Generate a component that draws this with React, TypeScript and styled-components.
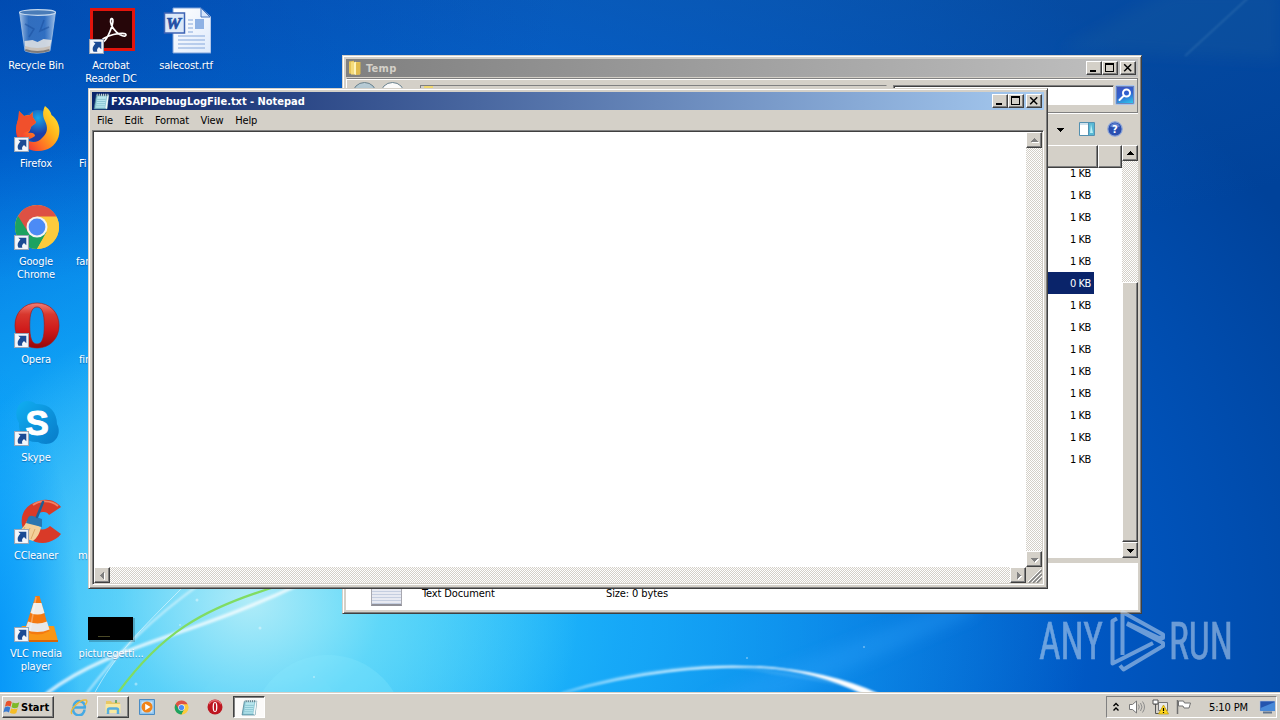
import { ReactNode } from 'react'
import styled, { createGlobalStyle, css } from 'styled-components'

const GlobalStyle = createGlobalStyle`
  * {
    box-sizing: border-box;
  }

  body {
    margin: 0;
    overflow: hidden;
    font-family: "DejaVu Sans Condensed", "DejaVu Sans", sans-serif;
    font-stretch: condensed;
    font-size: 11px;
    line-height: 13px;
    letter-spacing: -0.12px;
    color: #000;
    cursor: default;
  }

  svg {
    display: block;
    flex: none;
  }
`

const raised = css`
  border: 1px solid;
  border-color: #fff #404040 #404040 #fff;
  box-shadow: inset -1px -1px 0 #808080;
  background: #d4d0c8;
`

const sunken = css`
  border: 1px solid;
  border-color: #808080 #fff #fff #808080;
`

const Screen = styled.div`
  position: relative;
  display: flex;
  flex-direction: column;
  width: 1280px;
  height: 720px;
  overflow: hidden;
`

const Desktop = styled.main`
  position: relative;
  flex: 1;
  overflow: hidden;
  background:
    radial-gradient(ellipse 90px 300px at -10px 660px, rgba(0, 145, 248, .9) 0%, rgba(0, 150, 250, .6) 45%, rgba(0, 150, 252, 0) 100%),
    radial-gradient(ellipse 560px 280px at 0 0, rgba(0, 62, 160, .5) 0%, rgba(0, 62, 160, 0) 100%),
    radial-gradient(ellipse 330px 300px at 250px 600px, rgba(190, 240, 248, .9) 0%, rgba(130, 226, 248, .6) 40%, rgba(60, 204, 248, 0) 100%),
    radial-gradient(ellipse 760px 520px at 330px 620px, rgba(50, 208, 250, .95) 0%, rgba(30, 180, 252, .75) 38%, rgba(10, 140, 240, 0) 100%),
    radial-gradient(ellipse 900px 320px at 700px -60px, rgba(20, 100, 185, .5) 0%, rgba(20, 100, 190, 0) 100%),
    radial-gradient(ellipse 1250px 900px at 180px 640px, #009cfa 0%, #0090f0 28%, #006edc 52%, #0058c4 72%, #00429a 100%);
`

const Wallpaper = styled.svg`
  position: absolute;
  inset: 0;
`

const IconGrid = styled.div`
  position: relative;
  display: grid;
  grid-template-columns: repeat(3, 75px);
  grid-auto-rows: 98px;
  margin-left: -1px;
  padding-top: 7px;
`

const Shortcut = styled.div`
  display: flex;
  flex-direction: column;
  align-items: center;
`

const ShortcutPicture = styled.div`
  position: relative;
  display: flex;
  justify-content: center;
  height: 48px;
  width: 48px;
`

const ShortcutLabel = styled.div<{ $indent?: number }>`
  margin: 4px 1px 0 0;
  color: #fff;
  text-align: center;
  text-shadow: 0 1px 1px rgba(0, 40, 110, .45);
  white-space: pre;
  ${({ $indent }) => $indent !== undefined && css`
    align-self: flex-start;
    margin-top: 52px;
    padding-left: ${$indent}px;
  `}
`

const ArrowBadge = styled.svg`
  position: absolute;
  left: 1px;
  bottom: 1px;
`

const Window = styled.section<{ $x: number, $y: number, $w: number, $h: number }>`
  position: absolute;
  left: ${({ $x }) => $x}px;
  top: ${({ $y }) => $y}px;
  width: ${({ $w }) => $w}px;
  height: ${({ $h }) => $h}px;
  display: flex;
  flex-direction: column;
  padding: 3px;
  border: 1px solid;
  border-color: #d4d0c8 #404040 #404040 #d4d0c8;
  box-shadow: inset 1px 1px 0 #fff, inset -1px -1px 0 #808080;
  background: #d4d0c8;
`

const TitleBar = styled.header<{ $active?: boolean }>`
  display: flex;
  align-items: center;
  flex: none;
  height: 18px;
  padding: 0 2px 0 1px;
  color: ${({ $active }) => ($active ? '#fff' : '#d4d0c8')};
  background: ${({ $active }) => ($active
    ? 'linear-gradient(90deg, #0a246a, #a6caf0)'
    : 'linear-gradient(90deg, #808080, #c0c0c0)')};
`

const Title = styled.h1<{ $spacing?: number, $gap?: number }>`
  flex: 1;
  margin: 0 0 0 ${({ $gap = 1 }) => $gap}px;
  padding-top: 1px;
  font-size: 11px;
  line-height: 14px;
  font-weight: bold;
  letter-spacing: ${({ $spacing = 0 }) => $spacing}px;
`

const CaptionButton = styled.button<{ $gap?: boolean }>`
  ${raised}
  width: 16px;
  height: 14px;
  padding: 0;
  margin-left: ${({ $gap }) => ($gap ? 2 : 0)}px;
`

const MenuBar = styled.nav`
  display: flex;
  flex: none;
  height: 20px;
  align-items: center;
  padding-left: 5px;
  gap: 11.6px;
`

const Sheet = styled.div`
  display: grid;
  grid-template-columns: 1fr 16px;
  grid-template-rows: 1fr 16px;
  flex: 1;
  border: 1px solid;
  border-color: #808080 #fff #fff #808080;
  box-shadow: inset 1px 1px 0 #404040;
  padding: 1px;
`

const Page = styled.div`
  background: #fff;
`

const ScrollBar = styled.div<{ $horizontal?: boolean }>`
  display: flex;
  flex-direction: ${({ $horizontal }) => ($horizontal ? 'row' : 'column')};
  justify-content: space-between;
  background: repeating-conic-gradient(#fff 0 25%, #d4d0c8 0 50%) 0 0 / 2px 2px;
`

const ScrollButton = styled.button`
  ${raised}
  display: flex;
  align-items: center;
  justify-content: center;
  flex: none;
  width: 16px;
  height: 16px;
  padding: 0;
`

const ScrollThumb = styled.div`
  ${raised}
  height: 260px;
  margin-top: auto;
`

const Corner = styled.div`
  display: flex;
  align-items: flex-end;
  justify-content: flex-end;
  background: #d4d0c8;
`

const AddressBand = styled.div`
  display: flex;
  flex: none;
  height: 35px;
  margin-top: 1px;
  padding: 6px 1px 0 5px;
  border: 1px solid;
  border-color: #808080 #808080 #808080 #fff;
  box-shadow: inset 0 1px 0 #fff, 0 1px 0 #fff;
`

const RoundButton = styled.div`
  width: 25px;
  height: 25px;
  margin: -3px 3px 0 0;
  border: 1px solid #68808c;
  border-radius: 50%;
  background: linear-gradient(#b8ccd6, #9db5c0);
  & + & {
    background: #fafafa;
  }
`

const Field = styled.div<{ $w: number, $gap: number, $disabled?: boolean }>`
  display: flex;
  width: ${({ $w }) => $w}px;
  height: 21px;
  margin-left: ${({ $gap }) => $gap}px;
  padding-left: 3px;
  background: ${({ $disabled }) => ($disabled ? '#d4d0c8' : '#fff')};
  border: 1px solid;
  border-color: #808080 #d4d0c8 #d4d0c8 #808080;
  box-shadow: ${({ $disabled }) => ($disabled ? 'none' : 'inset 1px 1px 0 #404040')};
`

const Crumb = styled.div`
  width: 9px;
  height: 12px;
  background: #f0d870;
`

const SearchButton = styled.div`
  display: flex;
  align-items: center;
  justify-content: center;
  width: 20px;
  height: 20px;
  margin-left: 1px;
  border: 1px solid #a9c4ee;
  outline: 1px solid #6f86b8;
  outline-offset: -2px;
  border-radius: 2px;
  background: linear-gradient(160deg, #3d55c0 10%, #2f62d0 50%, #30d8f0 100%);
`

const CommandBar = styled.div`
  display: flex;
  align-items: center;
  justify-content: flex-end;
  flex: none;
  height: 32px;
  padding-right: 15px;
  gap: 11px;
`

const ListArea = styled.div`
  display: grid;
  grid-template-columns: 1fr 16px;
  height: 413px;
  background: #fff;
`

const ListPane = styled.div`
  display: flex;
  flex-direction: column;
  overflow: hidden;
`

const ColumnHeads = styled.div`
  position: relative;
  display: flex;
  flex: none;
  height: 23px;
`

const ColumnHead = styled.div<{ $w?: number }>`
  width: ${({ $w }) => ($w ? `${$w}px` : 'auto')};
  flex: ${({ $w }) => ($w ? 'none' : 1)};
  ${raised}
`

const FileRow = styled.div<{ $selected?: boolean }>`
  display: flex;
  align-items: center;
  justify-content: flex-end;
  flex: none;
  height: 22px;
  width: 748px;
  padding-right: 3px;
  letter-spacing: -0.4px;
  color: ${({ $selected }) => ($selected ? '#fff' : '#000')};
  background: ${({ $selected }) => ($selected ? '#0a246a' : 'transparent')};
`

const Rows = styled.div`
  margin-top: -6px;
`

const Details = styled.footer`
  display: flex;
  flex: 1;
  margin-top: 5px;
  padding: 22px 0 0 25px;
  background: #fff;
`

const DetailText = styled.div<{ $w: number }>`
  width: ${({ $w }) => $w}px;
  padding-top: 2px;
`

const DocumentThumb = styled.div`
  width: 31px;
  height: 21px;
  margin-right: 20px;
  border: 1px solid #a8a8b0;
  border-bottom: 2px solid #909098;
  background: repeating-linear-gradient(#e8eaf2 0 2px, #c5cee0 2px 3px);
`

const TaskBar = styled.footer`
  position: relative;
  display: flex;
  align-items: center;
  height: 28px;
  padding: 1px 3px 0 2px;
  background: #d4d0c8;
  border-top: 1px solid #d4d0c8;
  box-shadow: inset 0 1px 0 #fff;
`

const StartButton = styled.button`
  ${raised}
  display: flex;
  align-items: center;
  gap: 0;
  width: 52px;
  height: 22px;
  padding: 0;
  margin-right: 9px;
  font: bold 11px "DejaVu Sans Condensed", "DejaVu Sans", sans-serif;
  font-stretch: condensed;
  letter-spacing: 0;
`

const TaskItem = styled.div<{ $state?: 'open' | 'active' }>`
  display: flex;
  align-items: center;
  justify-content: center;
  width: 32px;
  height: 22px;
  margin-right: 2px;
  ${({ $state }) => $state === 'open' && raised}
  ${({ $state }) => $state === 'active' && css`
    border: 1px solid;
    border-color: #404040 #fff #fff #404040;
    box-shadow: inset 1px 1px 0 #808080;
    background: #fbfaf9;
  `}
`

const Tray = styled.div`
  ${sunken}
  display: flex;
  align-items: center;
  width: 171px;
  height: 22px;
  margin-left: auto;
  padding-left: 5px;
`

const TrayIcons = styled.div`
  display: flex;
  align-items: center;
  gap: 6px;
  margin-left: 8px;
`

const Clock = styled.time`
  flex: 1;
  text-align: center;
  padding-left: 5px;
`

const Watermark = styled.svg`
  position: absolute;
  left: 1030px;
  top: 606px;
  overflow: visible;
`

type GlyphProps = { d: string, muted?: boolean }

function ArrowGlyph({ d, muted }: GlyphProps) {
  return (
    <svg width="9" height="9" viewBox="0 0 9 9" shapeRendering="crispEdges">
      {muted && <path d={d} fill="#fff" transform="translate(1 1)" />}
      <path d={d} fill={muted ? '#808080' : '#000'} />
    </svg>
  )
}

const UP = 'M4 2h1v1h1v1h1v1h1v1H1V5h1V4h1V3h1z'
const DOWN = 'M1 3h7v1H7v1H6v1H5v1H4V6H3V5H2V4H1z'
const LEFT = 'M2 4h1V3h1V2h1V1h1v7H5V7H4V6H3V5H2z'
const RIGHT = 'M3 1h1v1h1v1h1v1h1v1H6v1H5v1H4v1H3z'

function CaptionButtons() {
  return (
    <>
      <CaptionButton aria-label="Minimize">
        <svg width="14" height="12" shapeRendering="crispEdges"><path d="M3 8h6v2H3z" /></svg>
      </CaptionButton>
      <CaptionButton aria-label="Maximize">
        <svg width="14" height="12" shapeRendering="crispEdges">
          <path d="M2 1h9v9H2zM3 3v6h7V3z" fillRule="evenodd" />
        </svg>
      </CaptionButton>
      <CaptionButton aria-label="Close" $gap>
        <svg width="14" height="12"><path d="M3.200 2.200l7 7M10.200 2.200l-7 7" stroke="#000" strokeWidth="1.500" /></svg>
      </CaptionButton>
    </>
  )
}

function NotepadIcon({ size = 16 }: { size?: number }) {
  return (
    <svg width={size} height={size} viewBox="0 0 16 16">
      <path d="M3.200 2h11.600l-1.600 13H1z" fill="#8fc9d6" stroke="#477e90" strokeWidth=".7" />
      <path d="M4.400 3h8l-1.500 10.600h-8z" fill="#b8e6ee" />
      <path d="M4 6h8M3.700 8h8M3.400 10h8M3.100 12h8" stroke="#75b5c5" strokeWidth=".6" />
      <path d="M13.400 3l1.400-.8L13.200 15l-1.600-.8z" fill="#f1f7f8" />
      <path d="M4 .7v2M6 .7v2M8 .7v2M10 .7v2M12 .7v2M14 .7v2" stroke="#e3ebed" strokeWidth=".9" />
      <path d="M4.800 1v2M6.800 1v2M8.800 1v2M10.800 1v2M12.800 1v2" stroke="#46616b" strokeWidth=".6" />
    </svg>
  )
}

function FolderIcon() {
  return (
    <svg width="16" height="16" viewBox="0 0 16 16">
      <path d="M2 1.500l5-.8v13.500l-5-.7z" fill="#e7c659" />
      <path d="M4 2h9v12.500H4z" fill="#f5dc7d" />
      <path d="M7 3l2-1.500V15l-2-1z" fill="#fff4ba" />
      <path d="M9 2.500l4.500-.5v12L9 15z" fill="#e0bb4e" />
    </svg>
  )
}

function RecycleBin() {
  return (
    <svg width="48" height="48" viewBox="0 0 48 48">
      <defs>
        <linearGradient id="bin">
          <stop offset="0" stopColor="#dceaf8" stopOpacity=".75" />
          <stop offset=".25" stopColor="#5283c4" stopOpacity=".6" />
          <stop offset=".7" stopColor="#4a80c8" stopOpacity=".65" />
          <stop offset="1" stopColor="#c5dcf5" stopOpacity=".8" />
        </linearGradient>
      </defs>
      <path d="M6.500 5l5.500 39q12 4.500 25-.2L42.500 5z" fill="url(#bin)" stroke="#a5c2e4" strokeWidth=".8" />
      <path d="M12 17l9 5-5 8M31 13l-4 11 9-4" fill="none" stroke="#174b9c" strokeWidth="1.500" opacity=".5" />
      <path d="M11.500 34l8 -1 5 2 6-3 8 1-2 10q-12 4-24 0z" fill="#e8e6e4" opacity=".85" />
      <path d="M12 39q12 4 25 0l-.6 5q-12 4-23.800 0z" fill="#c8c0b8" />
      <path d="M12.300 43q12 4 24.200 0" stroke="#7d7a7a" strokeWidth="2" fill="none" />
      <ellipse cx="24.500" cy="5.500" rx="18" ry="2.800" fill="#4a7cb8" stroke="#c5d9ef" strokeWidth="1.200" />
    </svg>
  )
}

function AcrobatIcon() {
  return (
    <svg width="48" height="48" viewBox="0 0 48 48">
      <path d="M2 1h45v43H2z" fill="#e3140c" />
      <path d="M5 4h39v37H5z" fill="#260609" />
      <path
        d="M13.500 35c-2-2 6-6 12-7.500 7-1.700 13-1.700 12.500.6-.6 2.400-6 .4-9.500-3-4.500-4.300-6.800-9.600-5.800-12.600.8-2 2.600-.7 2.200 2.200-.8 6-7.300 22.300-11.400 20.300z"
        fill="none"
        stroke="#fff"
        strokeWidth="1.700"
      />
    </svg>
  )
}

function WordIcon() {
  return (
    <svg width="48" height="48" viewBox="0 0 48 48">
      <defs>
        <linearGradient id="paper" x2="1" y2="1">
          <stop offset="0" stopColor="#fff" />
          <stop offset="1" stopColor="#dfeafb" />
        </linearGradient>
      </defs>
      <path d="M10 1h28l10 9v36H10z" fill="url(#paper)" stroke="#7da1d8" strokeWidth="1" />
      <path d="M38 1v9h9z" fill="#d5e4fa" stroke="#4474c0" strokeWidth="1" />
      <path d="M25 13h5M25 17h5M25 21h5M25 25h5M15 29h27M15 33h27M15 37h27M15 41h27" stroke="#86a8dc" strokeWidth="1.200" />
      <path d="M32 12h9v10h-9z" fill="#8eb1e4" />
      <path d="M1.500 6h20v20h-20z" fill="#dce8f8" stroke="#3d63b4" strokeWidth="1.500" />
      <text x="3" y="21.500" fontFamily="Liberation Serif, serif" fontWeight="bold" fontStyle="italic" fontSize="17" fill="#234fa4" stroke="#234fa4" strokeWidth=".7">W</text>
    </svg>
  )
}

function FirefoxIcon() {
  return (
    <svg width="48" height="48" viewBox="0 0 48 48">
      <defs>
        <linearGradient id="fox" x1="1" y1="0" x2="0" y2=".8">
          <stop offset="0" stopColor="#fff33c" />
          <stop offset=".4" stopColor="#ffb31a" />
          <stop offset=".7" stopColor="#ff6b26" />
          <stop offset="1" stopColor="#e8233f" />
        </linearGradient>
        <radialGradient id="globe" cy=".25">
          <stop offset="0" stopColor="#18a6e8" />
          <stop offset="1" stopColor="#1b3fa8" />
        </radialGradient>
      </defs>
      <circle cx="25" cy="21" r="16" fill="url(#globe)" />
      <path
        d="M32 1c5 4 6 7 6.500 9 7 5 9.500 14 7 22-3 9-11 14-20 14C13 46 3.500 38 3 26c0-7 2-11 3-13l0-7 5 5c2-1 4-1 6-1l3-3c-1 3-.5 5 1 7l2 3c0 2-4 3-5 5-1 3-1 4-3 6 5-1 7 1 7 3-3 2-6 4-9 3 4 4 12 4 16-1 6-5 6-11 3-17-3-6-2-11 0-15z"
        fill="url(#fox)"
      />
      <path d="M5 14l1-8 5 5 6-1 3-3c-1 3-.5 5 1 7l2 3c0 2-4 3-5 5l-2 4c-5 1-8 3-9 7-5-4-4-11-2-19z" fill="#f0502c" />
    </svg>
  )
}

function ChromeIcon({ size = 48 }: { size?: number }) {
  return (
    <svg width={size} height={size} viewBox="0 0 48 48">
      <circle cx="24" cy="24" r="22" fill="#fccb3d" />
      <path d="M24 24L5 13A22 22 0 0024 46l10-17z" fill="#1ca261" />
      <path d="M24 13.500h19.400A22 22 0 0124 46l9.500-17z" fill="#fccb3d" />
      <path d="M24 13.500h19.400A22 22 0 005 13l10 16z" fill="#dd5144" />
      <circle cx="24" cy="24" r="10.500" fill="#f3f3f3" />
      <circle cx="24" cy="24" r="8.400" fill="#4c8bf5" />
    </svg>
  )
}

function OperaIcon() {
  return (
    <svg width="48" height="48" viewBox="0 0 48 48">
      <defs>
        <linearGradient id="opera" x2="0" y2="1">
          <stop offset="0" stopColor="#f08078" />
          <stop offset=".25" stopColor="#d8382e" />
          <stop offset=".6" stopColor="#cf1a1a" />
          <stop offset="1" stopColor="#96080a" />
        </linearGradient>
      </defs>
      <path
        fill="url(#opera)"
        fillRule="evenodd"
        stroke="#a51a18"
        strokeWidth=".7"
        d="M24 2C36.500 2 46 11 46 24.500S36.500 47 24 47 2 38 2 24.500 11.500 2 24 2zm0 4c-5.500 0-7.300 7-7.300 18.500s1.800 18.500 7.300 18.500 7.300-7 7.300-18.500S29.500 6 24 6z"
      />
    </svg>
  )
}

function OperaTaskIcon() {
  return (
    <svg width="16" height="16" viewBox="0 0 16 16">
      <circle cx="8" cy="8" r="7.500" fill="#bd1620" />
      <path d="M2 5a7 7 0 0112 0" fill="none" stroke="#e2666a" strokeWidth="1.500" />
      <ellipse cx="8" cy="8" rx="2.400" ry="5" fill="#fff" />
      <ellipse cx="8" cy="8" rx="1.100" ry="4.200" fill="#bd1620" />
    </svg>
  )
}

function SkypeIcon() {
  return (
    <svg width="48" height="48" viewBox="0 0 48 48" overflow="visible">
      <defs>
        <linearGradient id="skype" x1="0" x2="1" y2="1">
          <stop offset="0" stopColor="#10aef2" />
          <stop offset="1" stopColor="#087bc8" />
        </linearGradient>
      </defs>
      <path d="M14 2c4 0 7 1 9 3 13-1 21 8 21 20 5 9-1 20-11 20-4 0-6-1-8-2C13 44 5 35 6 24 0 14 5 2 14 2z" fill="url(#skype)" />
      <text x="12.500" y="35.500" fontFamily="Liberation Sans, sans-serif" fontWeight="bold" fontSize="35" fill="#fff" stroke="#fff" strokeWidth="1">S</text>
    </svg>
  )
}

function CCleanerIcon() {
  return (
    <svg width="48" height="48" viewBox="0 0 48 48">
      <path d="M48 10c-5-6-13-9-22-6C13 7 7 17 9 28c2 14 16 21 27 17 5-2 9-4 12-8l-11-8c-5 5-12 5-14-2-2-7 2-13 8-12 2 0 4 1 5 3z" fill="#d93a28" />
      <path d="M45 9c-7-6-18-6-25-1" stroke="#f28265" strokeWidth="2" fill="none" />
      <path d="M14 24l14 6c-1 6-4 11-8 14L2 38c5-4 9-8 12-14z" fill="#f3d09a" />
      <path d="M12 30l-4 7M17 31l-4 9M22 32l-4 10" stroke="#d5a05c" strokeWidth=".8" />
      <path d="M15 21q1-3 5-2l9 3 0 8-16-4z" fill="#2a76b0" />
      <path d="M24 20l6-15" stroke="#1f5f94" strokeWidth="2.500" strokeLinecap="round" />
    </svg>
  )
}

function VlcIcon() {
  return (
    <svg width="48" height="48" viewBox="0 0 48 48">
      <path d="M9 31h32l4 15H1z" fill="#f99616" />
      <path d="M1 45h44v2H1z" fill="#d96606" />
      <path d="M22.500 1h4l10 35q-12 7-25 0z" fill="#f47a10" />
      <path d="M20.500 8h8l3 10q-7 3-14 0z" fill="#f0eeea" />
      <path d="M15 26.500q9.500 4 19 0l2.500 8q-12 5-24.500 0z" fill="#e8e8e8" />
      <path d="M23 2l-6 34" stroke="#fff" strokeWidth="1.500" opacity=".3" />
    </svg>
  )
}

function BlackThumb() {
  return (
    <svg width="48" height="48" viewBox="0 0 48 48">
      <path d="M1 23h46v24H1z" fill="#000" opacity=".2" />
      <path d="M0 22h45v23H0z" fill="#000" />
      <path d="M10 41.500h12" stroke="#4a4826" strokeWidth="1" />
    </svg>
  )
}

function ShortcutArrow() {
  return (
    <ArrowBadge width="15" height="15" viewBox="0 0 14 14">
      <path d="M.5 .5h13v13H.5z" fill="#f4f7fb" stroke="#9aa6b8" />
      <path d="M4 2.500h7.500v7L9.300 7.500C7.500 9 7.200 10 7.800 12H4.200C2.600 9 3.800 6.500 6 4.500z" fill="#1b4b94" />
    </ArrowBadge>
  )
}

type Item = { name: string, icon?: ReactNode, link?: boolean, indent?: number } | null

// Row by row, three columns wide
const shortcuts: Item[] = [
  { name: 'Recycle Bin', icon: <RecycleBin /> },
  { name: 'Acrobat\nReader DC', icon: <AcrobatIcon />, link: true },
  { name: 'salecost.rtf', icon: <WordIcon /> },
  { name: 'Firefox', icon: <FirefoxIcon />, link: true },
  { name: 'Fi', indent: 5 },
  null,
  { name: 'Google\nChrome', icon: <ChromeIcon />, link: true },
  { name: 'far', indent: 2 },
  null,
  { name: 'Opera', icon: <OperaIcon />, link: true },
  { name: 'fir', indent: 5 },
  null,
  { name: 'Skype', icon: <SkypeIcon />, link: true },
  null,
  null,
  { name: 'CCleaner', icon: <CCleanerIcon />, link: true },
  { name: 'mu', indent: 4 },
  null,
  { name: 'VLC media\nplayer', icon: <VlcIcon />, link: true },
  { name: 'picturegetti...', icon: <BlackThumb /> },
  null,
]

function DesktopIcons() {
  return (
    <IconGrid>
      {shortcuts.map((item, index) => (
        <Shortcut key={index}>
          {item?.icon && (
            <ShortcutPicture>
              {item.icon}
              {item.link && <ShortcutArrow />}
            </ShortcutPicture>
          )}
          {item && <ShortcutLabel $indent={item.indent}>{item.name}</ShortcutLabel>}
        </Shortcut>
      ))}
    </IconGrid>
  )
}

function WallpaperLines() {
  return (
    <Wallpaper width="1280" height="692" fill="none">
      <defs>
        <filter id="soft" x="-20%" y="-20%" width="140%" height="140%"><feGaussianBlur stdDeviation="1" /></filter>
        <filter id="haze" x="-20%" y="-50%" width="140%" height="200%"><feGaussianBlur stdDeviation="7" /></filter>
        <linearGradient id="arc" x1="560" x2="880" y1="0" y2="0" gradientUnits="userSpaceOnUse">
          <stop offset="0" stopColor="#8fd8ff" stopOpacity=".6" />
          <stop offset=".6" stopColor="#fff" stopOpacity=".95" />
          <stop offset="1" stopColor="#fff" />
        </linearGradient>
      </defs>
      <path d="M960 600L700 700h80L980 612z" fill="#39a9ff" opacity=".25" filter="url(#haze)" />
      <path d="M1060 50L1170-10h110v70z" fill="#2a6a9c" opacity=".18" filter="url(#haze)" />
      <path d="M1185 56L1248-2" stroke="#6aa0c8" strokeWidth="1.500" opacity=".3" filter="url(#soft)" />
      <circle cx="268" cy="732" r="77" fill="#8ceaff" opacity=".05" />
      <circle cx="328" cy="732" r="77" fill="#8ceaff" opacity=".25" />
      <path d="M46 694C110 645 190 637 300 584" stroke="#fff" strokeWidth="3.500" opacity=".75" filter="url(#soft)" />
      <path d="M86 694C120 650 150 620 200 584" stroke="#fff" strokeWidth="2" opacity=".6" filter="url(#soft)" />
      <path d="M94 694C115 655 140 630 182 588" stroke="#fff" strokeWidth="1" opacity=".5" />
      <path d="M117 694C160 635 200 608 285 584" stroke="#80dc62" strokeWidth="2.300" />
      <path d="M560 694C640 668 720 660 770 672C810 678 850 684 876 694" stroke="#bdeaff" strokeWidth="4" opacity=".12" filter="url(#soft)" />
      <path d="M562 693C640 668 715 665 755 667Q825 670 878 694H864Q815 670 760 667C700 666 640 672 562 693z" fill="url(#arc)" stroke="url(#arc)" strokeWidth="1.300" filter="url(#soft)" />
      <g fill="#fff" opacity=".4">
        <circle cx="197" cy="600" r="1.500" />
        <circle cx="260" cy="628" r="1.500" />
        <circle cx="136" cy="684" r="1.500" />
        <circle cx="180" cy="625" r="1" />
        <circle cx="314" cy="677" r="1" />
        <circle cx="747" cy="658" r="1" />
        <circle cx="864" cy="647" r="1" />
      </g>
    </Wallpaper>
  )
}

function ExplorerWindow() {
  return (
    <Window $x={342} $y={55} $w={800} $h={559}>
      <TitleBar>
        <FolderIcon />
        <Title $spacing={0.3} $gap={3}>Temp</Title>
        <CaptionButtons />
      </TitleBar>
      <AddressBand>
        <RoundButton />
        <RoundButton />
        <Field $w={467} $gap={12} $disabled><Crumb /></Field>
        <Field $w={221} $gap={6} />
        <SearchButton>
          <svg width="16" height="16" viewBox="0 0 16 16" fill="none" stroke="#fff" strokeWidth="2">
            <circle cx="9.500" cy="6" r="3.500" />
            <path d="M7 8.500L2.500 13" strokeLinecap="round" />
          </svg>
        </SearchButton>
      </AddressBand>
      <CommandBar>
        <ArrowGlyph d={DOWN} />
        <svg width="20" height="16" viewBox="0 0 20 16">
          <path d="M3.500 1.500h15v13h-15z" fill="#fff" stroke="#5390b0" />
          <path d="M4 2h9v2H4z" fill="#cfe2ee" />
          <path d="M13 2h5v12h-5z" fill="#58b8d4" />
          <path d="M15 3l2 9h-3z" fill="#b8eef5" />
          <path d="M12.500 2v12" stroke="#5390b0" />
        </svg>
        <svg width="16" height="16" viewBox="0 0 16 16">
          <circle cx="8" cy="8" r="7.200" fill="#2a4fb0" stroke="#8ba4d8" strokeWidth="1.200" />
          <path d="M3 5.500a5.500 5.500 0 0110 0q-5 2-10 0z" fill="#7d9de0" opacity=".7" />
          <text x="5" y="12" fontSize="11" fontWeight="bold" fontFamily="DejaVu Sans, sans-serif" fill="#fff">?</text>
        </svg>
      </CommandBar>
      <ListArea>
        <ListPane>
          <ColumnHeads>
            <ColumnHead />
            <ColumnHead $w={24} />
          </ColumnHeads>
          <Rows>
            {Array.from({ length: 14 }, (_, index) => (
              <FileRow key={index} $selected={index === 5}>{index === 5 ? '0 KB' : '1 KB'}</FileRow>
            ))}
          </Rows>
        </ListPane>
        <ScrollBar>
          <ScrollButton><ArrowGlyph d={UP} /></ScrollButton>
          <ScrollThumb />
          <ScrollButton><ArrowGlyph d={DOWN} /></ScrollButton>
        </ScrollBar>
      </ListArea>
      <Details>
        <DocumentThumb />
        <DetailText $w={184}>Text Document</DetailText>
        <DetailText $w={100}>Size: 0 bytes</DetailText>
      </Details>
    </Window>
  )
}

function NotepadWindow() {
  return (
    <Window $x={88} $y={88} $w={960} $h={501}>
      <TitleBar $active>
        <NotepadIcon size={17} />
        <Title $spacing={-0.03}>FXSAPIDebugLogFile.txt - Notepad</Title>
        <CaptionButtons />
      </TitleBar>
      <MenuBar>
        {['File', 'Edit', 'Format', 'View', 'Help'].map((name) => <span key={name}>{name}</span>)}
      </MenuBar>
      <Sheet>
        <Page />
        <ScrollBar>
          <ScrollButton><ArrowGlyph d={UP} muted /></ScrollButton>
          <ScrollButton><ArrowGlyph d={DOWN} muted /></ScrollButton>
        </ScrollBar>
        <ScrollBar $horizontal>
          <ScrollButton><ArrowGlyph d={LEFT} muted /></ScrollButton>
          <ScrollButton><ArrowGlyph d={RIGHT} muted /></ScrollButton>
        </ScrollBar>
        <Corner>
          <svg width="14" height="14">
            <path d="M1 14L14 1M5 14l9-9M9 14l5-5" stroke="#808080" strokeWidth="1.500" />
            <path d="M0 13L13 0M4 13l9-9M8 13l6-6" stroke="#fff" strokeWidth="1" />
          </svg>
        </Corner>
      </Sheet>
    </Window>
  )
}

function AnyRunMark() {
  return (
    <Watermark width="220" height="80" viewBox="0 0 220 80" opacity=".5">
      <g fill="#d5e4f4" stroke="#d5e4f4" strokeWidth=".5" fontFamily="Roboto, sans-serif" fontSize="52" letterSpacing="0">
        <text x="9" y="53" textLength="64" lengthAdjust="spacingAndGlyphs">ANY</text>
        <text x="139" y="53" textLength="64" lengthAdjust="spacingAndGlyphs">RUN</text>
      </g>
      <path
        fill="none"
        stroke="#d5e4f4"
        strokeWidth="4"
        strokeLinejoin="round"
        d="M87 12.500L82.500 15V57.500L123 37M92.500 49V6L133 28.500V32L128 31.500L97 17M90 59.500L93.500 63.500L133 40V37L97 18"
      />
    </Watermark>
  )
}

function StartFlag() {
  return (
    <svg width="18" height="18" viewBox="0 0 16 16">
      <path d="M2.800 3.500q2.500-2 5 0L6.700 7.700q-2.500-1.500-5 0z" fill="#e8532c" />
      <path d="M8.500 4q3 1.600 6-.3l-1.200 4.500q-2.800 1.700-5.700 0z" fill="#7db928" />
      <path d="M1.500 8.500q2.500-1.700 5 0l-1.200 4.300q-2.500-1.600-5 0z" fill="#3a7bd0" />
      <path d="M7.300 9q3 1.600 5.800 0l-1.300 4.300q-2.800 1.700-5.700-.2z" fill="#f5bd27" />
    </svg>
  )
}

function Taskbar() {
  return (
    <TaskBar>
      <StartButton>
        <StartFlag />
        Start
      </StartButton>
      <TaskItem>
        <svg width="18" height="18" viewBox="0 0 18 18" fill="none">
          <path d="M14.500 11.500A5.700 5.700 0 113.500 9.500h11.300A5.600 5.600 0 003.600 8" stroke="#45a9e4" strokeWidth="2.500" />
          <path d="M2 16C-1 13 9 1 16 2c2 1 0 4-1 5" stroke="#edba38" strokeWidth="1.400" />
        </svg>
      </TaskItem>
      <TaskItem $state="open">
        <svg width="18" height="18" viewBox="0 0 18 18">
          <path d="M2 3h5l1 1.500h8V15H2z" fill="#e8c864" />
          <path d="M1.500 6h15v9h-15z" fill="#f9e9a0" />
          <path d="M4 16v-4q0-1.500 1.500-1.500h7q1.500 0 1.500 1.500v4" fill="none" stroke="#57aede" strokeWidth="2.500" />
          <path d="M12 2v3" stroke="#4ca050" strokeWidth="1.500" />
        </svg>
      </TaskItem>
      <TaskItem>
        <svg width="16" height="16" viewBox="0 0 16 16">
          <path d="M.5 .5h15v15H.5z" fill="#8fc4ee" stroke="#4a8cc4" />
          <path d="M2.500 2.500h11v11h-11z" fill="#cbe4f8" />
          <circle cx="8" cy="8" r="5.500" fill="#f08319" />
          <path d="M6.200 4.800v6.400L11.500 8z" fill="#fff" />
        </svg>
      </TaskItem>
      <TaskItem><ChromeIcon size={15} /></TaskItem>
      <TaskItem><OperaTaskIcon /></TaskItem>
      <TaskItem $state="active"><NotepadIcon size={17} /></TaskItem>
      <Tray>
        <svg width="8" height="10" viewBox="0 0 8 10" fill="none" stroke="#000" strokeWidth="1.400">
          <path d="M1.500 4L4 1.500 6.500 4M1.500 8.500L4 6l2.500 2.500" />
        </svg>
        <TrayIcons>
          <svg width="18" height="16" viewBox="0 0 18 16" fill="none" stroke="#777">
            <path d="M1.500 5.500h3L8.500 2v12l-4-3.500h-3z" fill="#fff" />
            <path d="M10.500 5.500q1.500 2.500 0 5M12.500 4q3 4 0 8M14.500 2.500q4 5.500 0 11" stroke="#8c8c8c" />
          </svg>
          <svg width="17" height="16" viewBox="0 0 17 16" fill="none">
            <path d="M6.500 3.500h9v8h-9z" fill="#e9e9e9" stroke="#777" />
            <path d="M1.500 1v4h4V1M3.500 5v9.500h6" stroke="#555" />
            <path d="M1 1h5v4H1z" fill="#fff" stroke="#555" />
            <path d="M11.500 6l5 9h-10z" fill="#ffd61e" stroke="#b89500" strokeWidth=".7" />
            <path d="M11.500 9v3M11.500 13v1" stroke="#000" strokeWidth="1.200" />
          </svg>
          <svg width="18" height="16" viewBox="0 0 18 16" fill="#fff" stroke="#707070">
            <path d="M2.500 1v14" strokeWidth="1.500" />
            <path d="M3.500 2h5l1 2h6l-1.500 5h-5l-1-2h-4.500z" />
          </svg>
        </TrayIcons>
        <Clock>5:10 PM</Clock>
        <svg width="17" height="16" viewBox="0 0 17 16">
          <path d="M1 2h15v10H1z" fill="#2454ae" stroke="#b8c8e0" strokeWidth=".6" />
          <path d="M1.500 9L16 3v9H1.500z" fill="#4889d8" />
          <path d="M4 13.500h9" stroke="#62758c" strokeWidth="2" />
        </svg>
      </Tray>
    </TaskBar>
  )
}

function App() {
  return (
    <Screen>
      <GlobalStyle />
      <Desktop>
        <WallpaperLines />
        <DesktopIcons />
        <ExplorerWindow />
        <NotepadWindow />
        <AnyRunMark />
      </Desktop>
      <Taskbar />
    </Screen>
  )
}

export default App
